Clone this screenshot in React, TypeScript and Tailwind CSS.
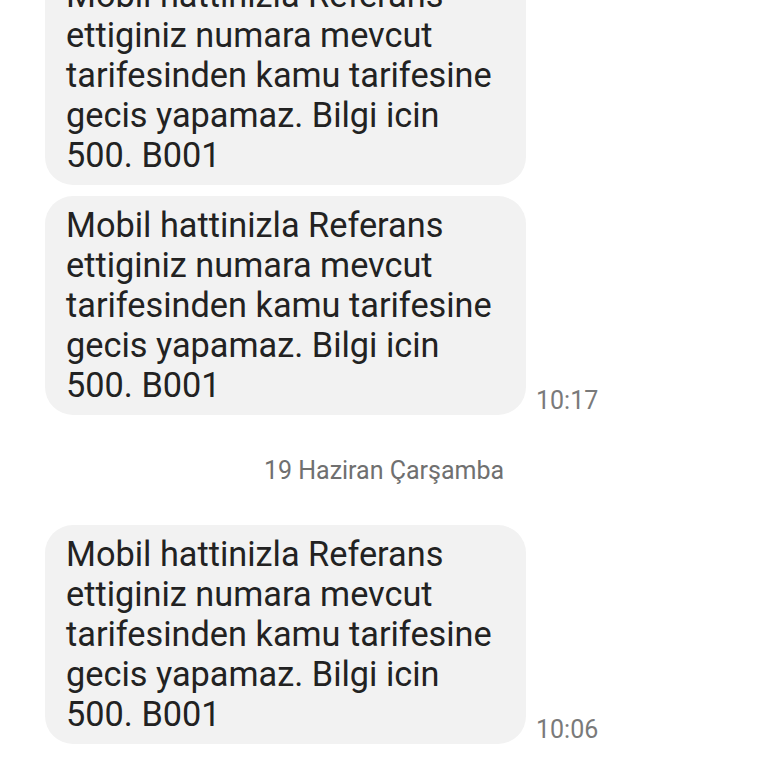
const MESSAGE =
  "Mobil hattinizla Referans ettiginiz numara mevcut tarifesinden kamu tarifesine gecis yapamaz. Bilgi icin 500. B001";

function Bubble({ time }: { time?: string }) {
  return (
    <div className="flex items-end">
      <div className="ml-[45px] w-[481px] shrink-0 rounded-[28px] bg-[#f2f2f2] pl-[21px] pr-[18px] pt-[9px] pb-[10px] text-[34.3px] leading-[40px] text-[#222222]">
        {MESSAGE}
      </div>
      {time && (
        <span className="ml-[10px] text-[25px] leading-[28px] text-[#7a7a7a]">{time}</span>
      )}
    </div>
  );
}

export default function App() {
  return (
    <div
      className="h-[768px] w-[768px] overflow-hidden bg-white"
      style={{ fontFamily: "Roboto, 'Noto Sans', sans-serif" }}
    >
      <div className="-mt-[34px] flex flex-col">
        <Bubble />
        <div className="mt-[11px]">
          <Bubble time="10:17" />
        </div>
        <div className="mt-[42px] mb-[40px] text-center text-[25px] leading-[28px] text-[#707070]">
          19 Haziran Çarşamba
        </div>
        <Bubble time="10:06" />
      </div>
    </div>
  );
}
